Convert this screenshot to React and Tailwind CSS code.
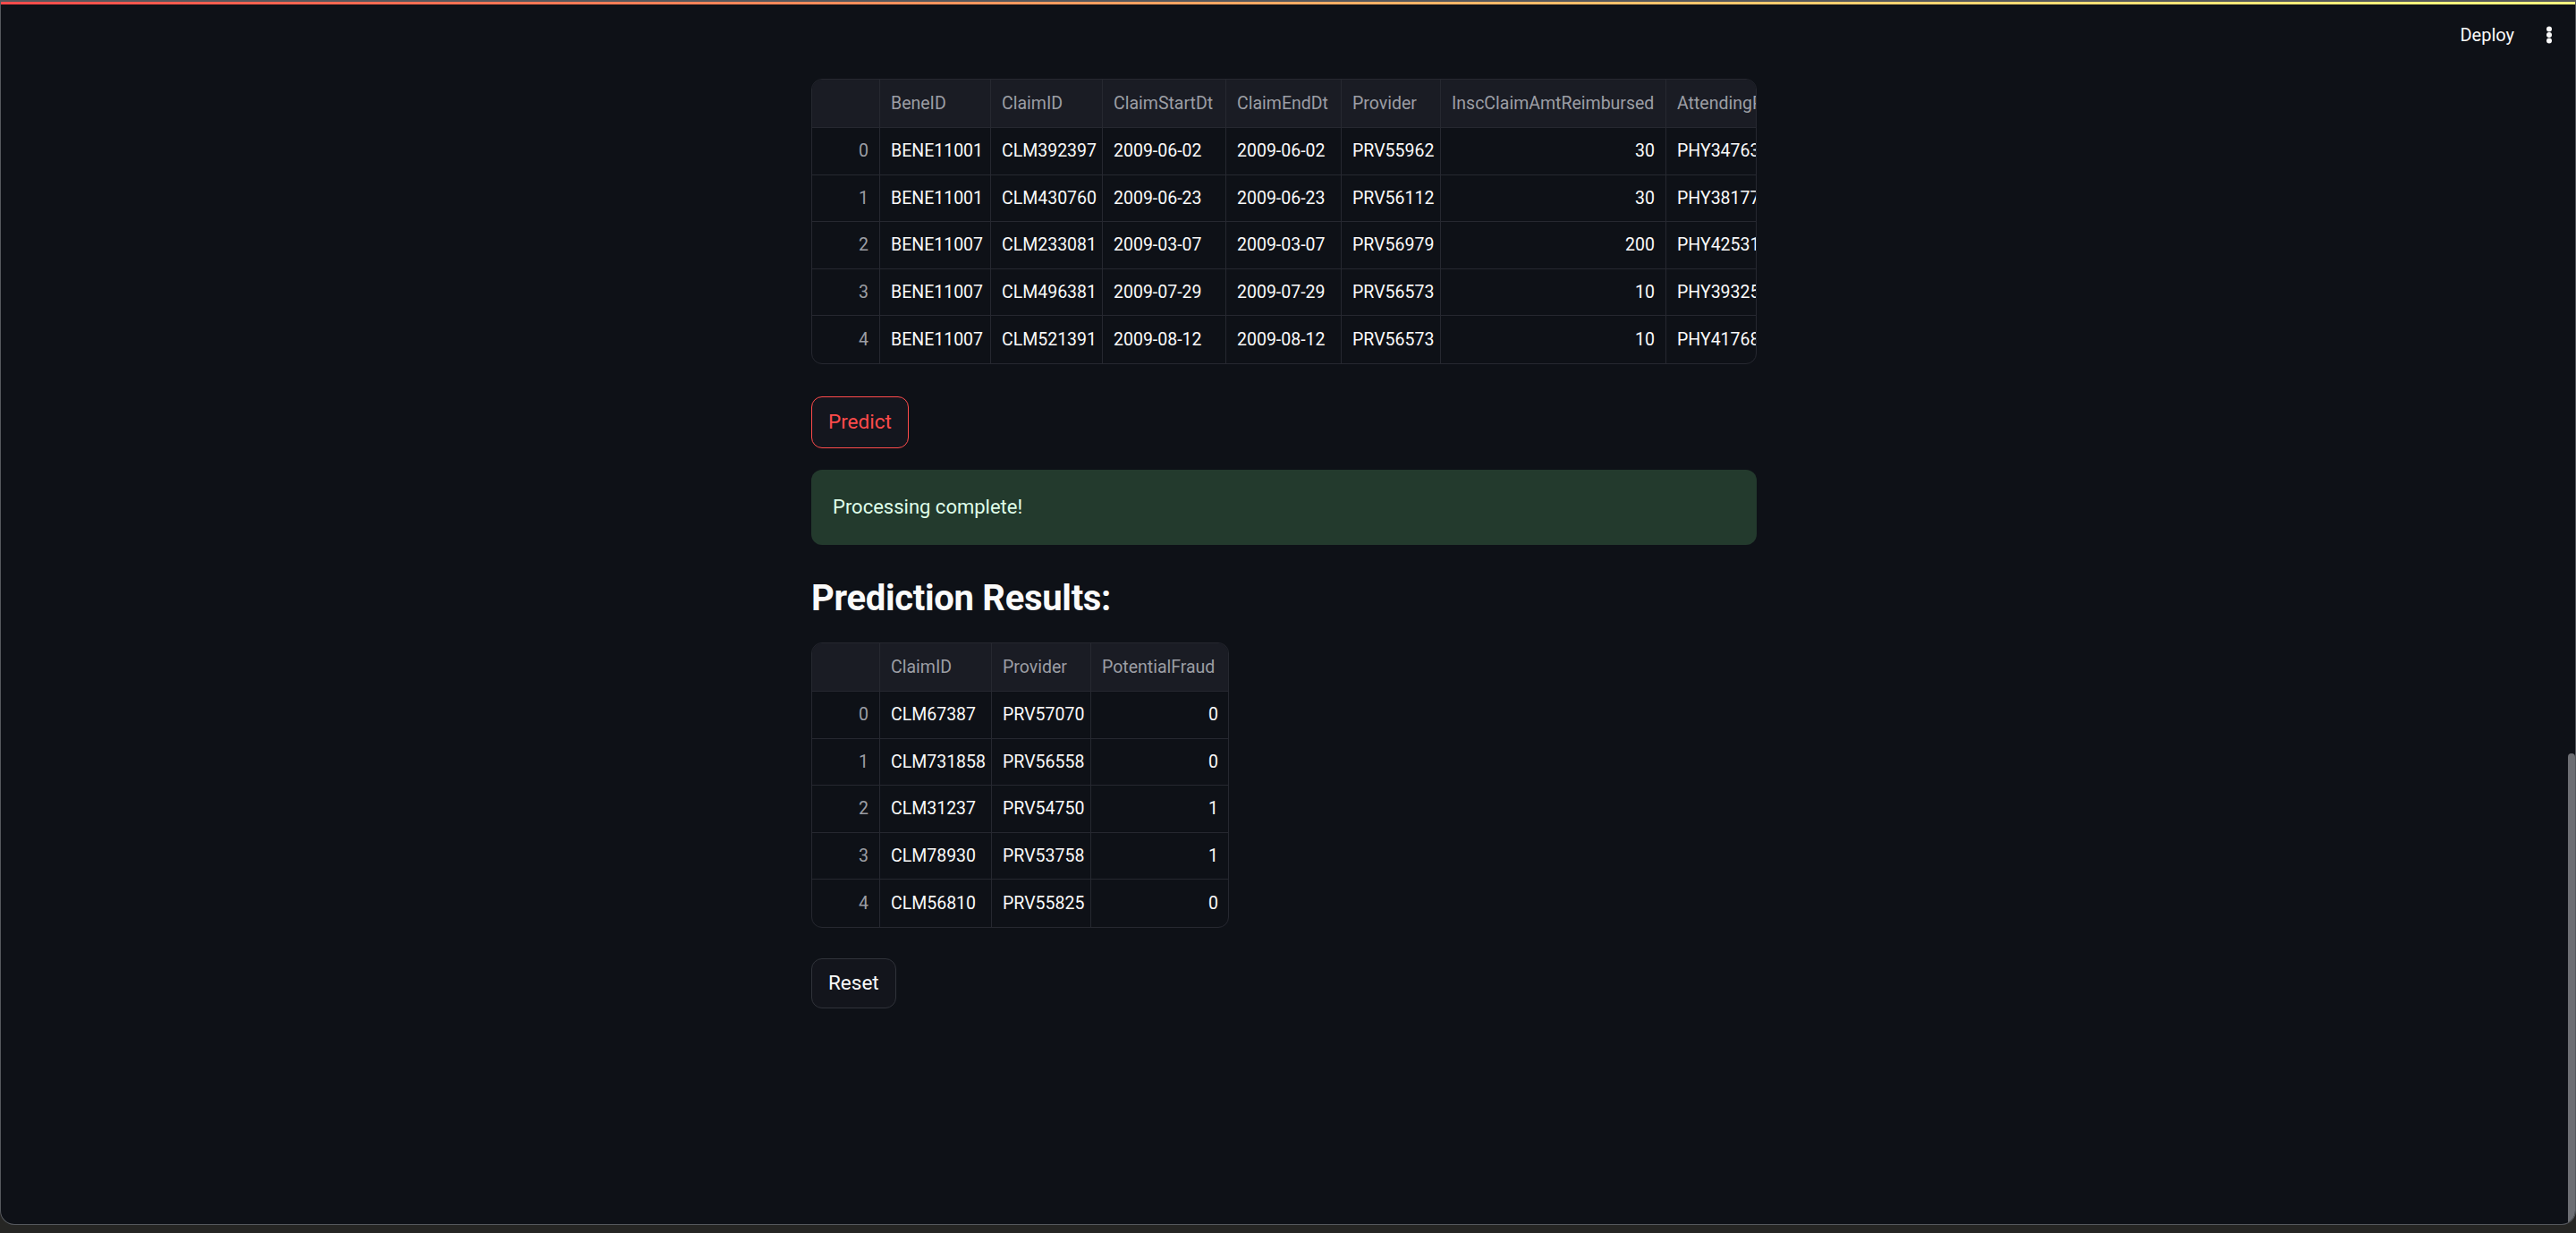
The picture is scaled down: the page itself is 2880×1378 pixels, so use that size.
import React from 'react';

const claims = [
    ['BENE11001', 'CLM392397', '2009-06-02', '2009-06-02', 'PRV55962', '30', 'PHY347633'],
    ['BENE11001', 'CLM430760', '2009-06-23', '2009-06-23', 'PRV56112', '30', 'PHY381777'],
    ['BENE11007', 'CLM233081', '2009-03-07', '2009-03-07', 'PRV56979', '200', 'PHY425311'],
    ['BENE11007', 'CLM496381', '2009-07-29', '2009-07-29', 'PRV56573', '10', 'PHY393253'],
    ['BENE11007', 'CLM521391', '2009-08-12', '2009-08-12', 'PRV56573', '10', 'PHY417685'],
];

const claimCols = [
    { name: 'BeneID', w: 'w-[124px]' },
    { name: 'ClaimID', w: 'w-[125px]' },
    { name: 'ClaimStartDt', w: 'w-[138px]' },
    { name: 'ClaimEndDt', w: 'w-[129px]' },
    { name: 'Provider', w: 'w-[111px]' },
    { name: 'InscClaimAmtReimbursed', w: 'w-[252px]', num: true },
    { name: 'AttendingPhysician', w: 'w-[200px]' },
];

const results = [
    ['CLM67387', 'PRV57070', '0'],
    ['CLM731858', 'PRV56558', '0'],
    ['CLM31237', 'PRV54750', '1'],
    ['CLM78930', 'PRV53758', '1'],
    ['CLM56810', 'PRV55825', '0'],
];

const resultCols = [
    { name: 'ClaimID', w: 'w-[125px]' },
    { name: 'Provider', w: 'w-[111px]' },
    { name: 'PotentialFraud', w: 'w-[154px]', num: true },
];

function DataFrame({ cols, rows, width }) {
    return (
        <div className={`${width} rounded-[12px] border border-[#262830] overflow-hidden text-[19.5px]`}>
            <div className="flex h-[54px] bg-[#1a1c24] border-b border-[#262830]">
                <div className="w-[76px] shrink-0 border-r border-[#262830]"></div>
                {cols.map((c, i) => (
                    <div
                        key={c.name}
                        className={`${c.w} shrink-0 px-3 flex items-center whitespace-nowrap text-[#9c9ea4] ${i < cols.length - 1 ? 'border-r border-[#262830]' : ''}`}
                    >
                        {c.name}
                    </div>
                ))}
            </div>
            {rows.map((r, ri) => (
                <div key={ri} className={`flex h-[52.6px] ${ri < rows.length - 1 ? 'border-b border-[#262830]' : ''}`}>
                    <div className="w-[76px] shrink-0 px-3 flex items-center justify-end text-[#9c9ea4] border-r border-[#262830]">
                        {ri}
                    </div>
                    {r.map((v, ci) => (
                        <div
                            key={ci}
                            className={`${cols[ci].w} shrink-0 px-3 flex items-center whitespace-nowrap text-[#fafafa] ${cols[ci].num ? 'justify-end' : ''} ${ci < r.length - 1 ? 'border-r border-[#262830]' : ''}`}
                        >
                            {v}
                        </div>
                    ))}
                </div>
            ))}
        </div>
    );
}

export default function App() {
    return (
        <div className="w-[2880px] h-[1378px] bg-[#262624] overflow-hidden" style={{ fontFamily: 'Roboto, "Noto Sans", sans-serif' }}>
            <div className="relative h-[1369px] bg-[#0e1117] border-x border-b border-t-2 border-[#55585d] rounded-b-[16px] overflow-hidden">
                <div className="h-[3px] bg-gradient-to-r from-[#ff4b4b] to-[#fffd80]"></div>

                {/* header toolbar */}
                <div className="absolute top-[22px] right-[26px] flex items-center gap-[36px] text-[20px] text-[#fafafa]">
                    <span>Deploy</span>
                    <svg width="6" height="20" viewBox="0 0 6 20" fill="#fafafa">
                        <circle cx="3" cy="3.5" r="3" />
                        <circle cx="3" cy="10" r="3" />
                        <circle cx="3" cy="16.5" r="3" />
                    </svg>
                </div>

                {/* scrollbar thumb */}
                <div className="absolute right-[0px] top-[840px] w-[8px] h-[540px] rounded-full bg-[#6c6e73]"></div>

                <div className="pl-[906px] pt-[83px] flex flex-col items-start">
                    <DataFrame cols={claimCols} rows={claims} width="w-[1057px]" />

                    <button className="mt-[36px] h-[58px] px-[18px] rounded-[12px] border border-[#ff4b4b] bg-[#14161e] text-[#ff4b4b] text-[22.5px]">
                        Predict
                    </button>

                    <div className="mt-[24px] w-[1057px] h-[84px] rounded-[12px] bg-[#233a2d] px-[24px] flex items-center text-[22px] text-[#dffde9]">
                        Processing complete!
                    </div>

                    <h2 className="mt-[30px] h-[60px] leading-[60px] text-[40px] font-bold text-[#fafafa] tracking-[-0.3px]">
                        Prediction Results:
                    </h2>

                    <div className="mt-[19px]">
                        <DataFrame cols={resultCols} rows={results} width="w-[467px]" />
                    </div>

                    <button className="mt-[34px] h-[56px] px-[18px] rounded-[12px] border border-[#30333a] bg-[#13151c] text-[#fafafa] text-[22.5px]">
                        Reset
                    </button>
                </div>
            </div>
        </div>
    );
}
